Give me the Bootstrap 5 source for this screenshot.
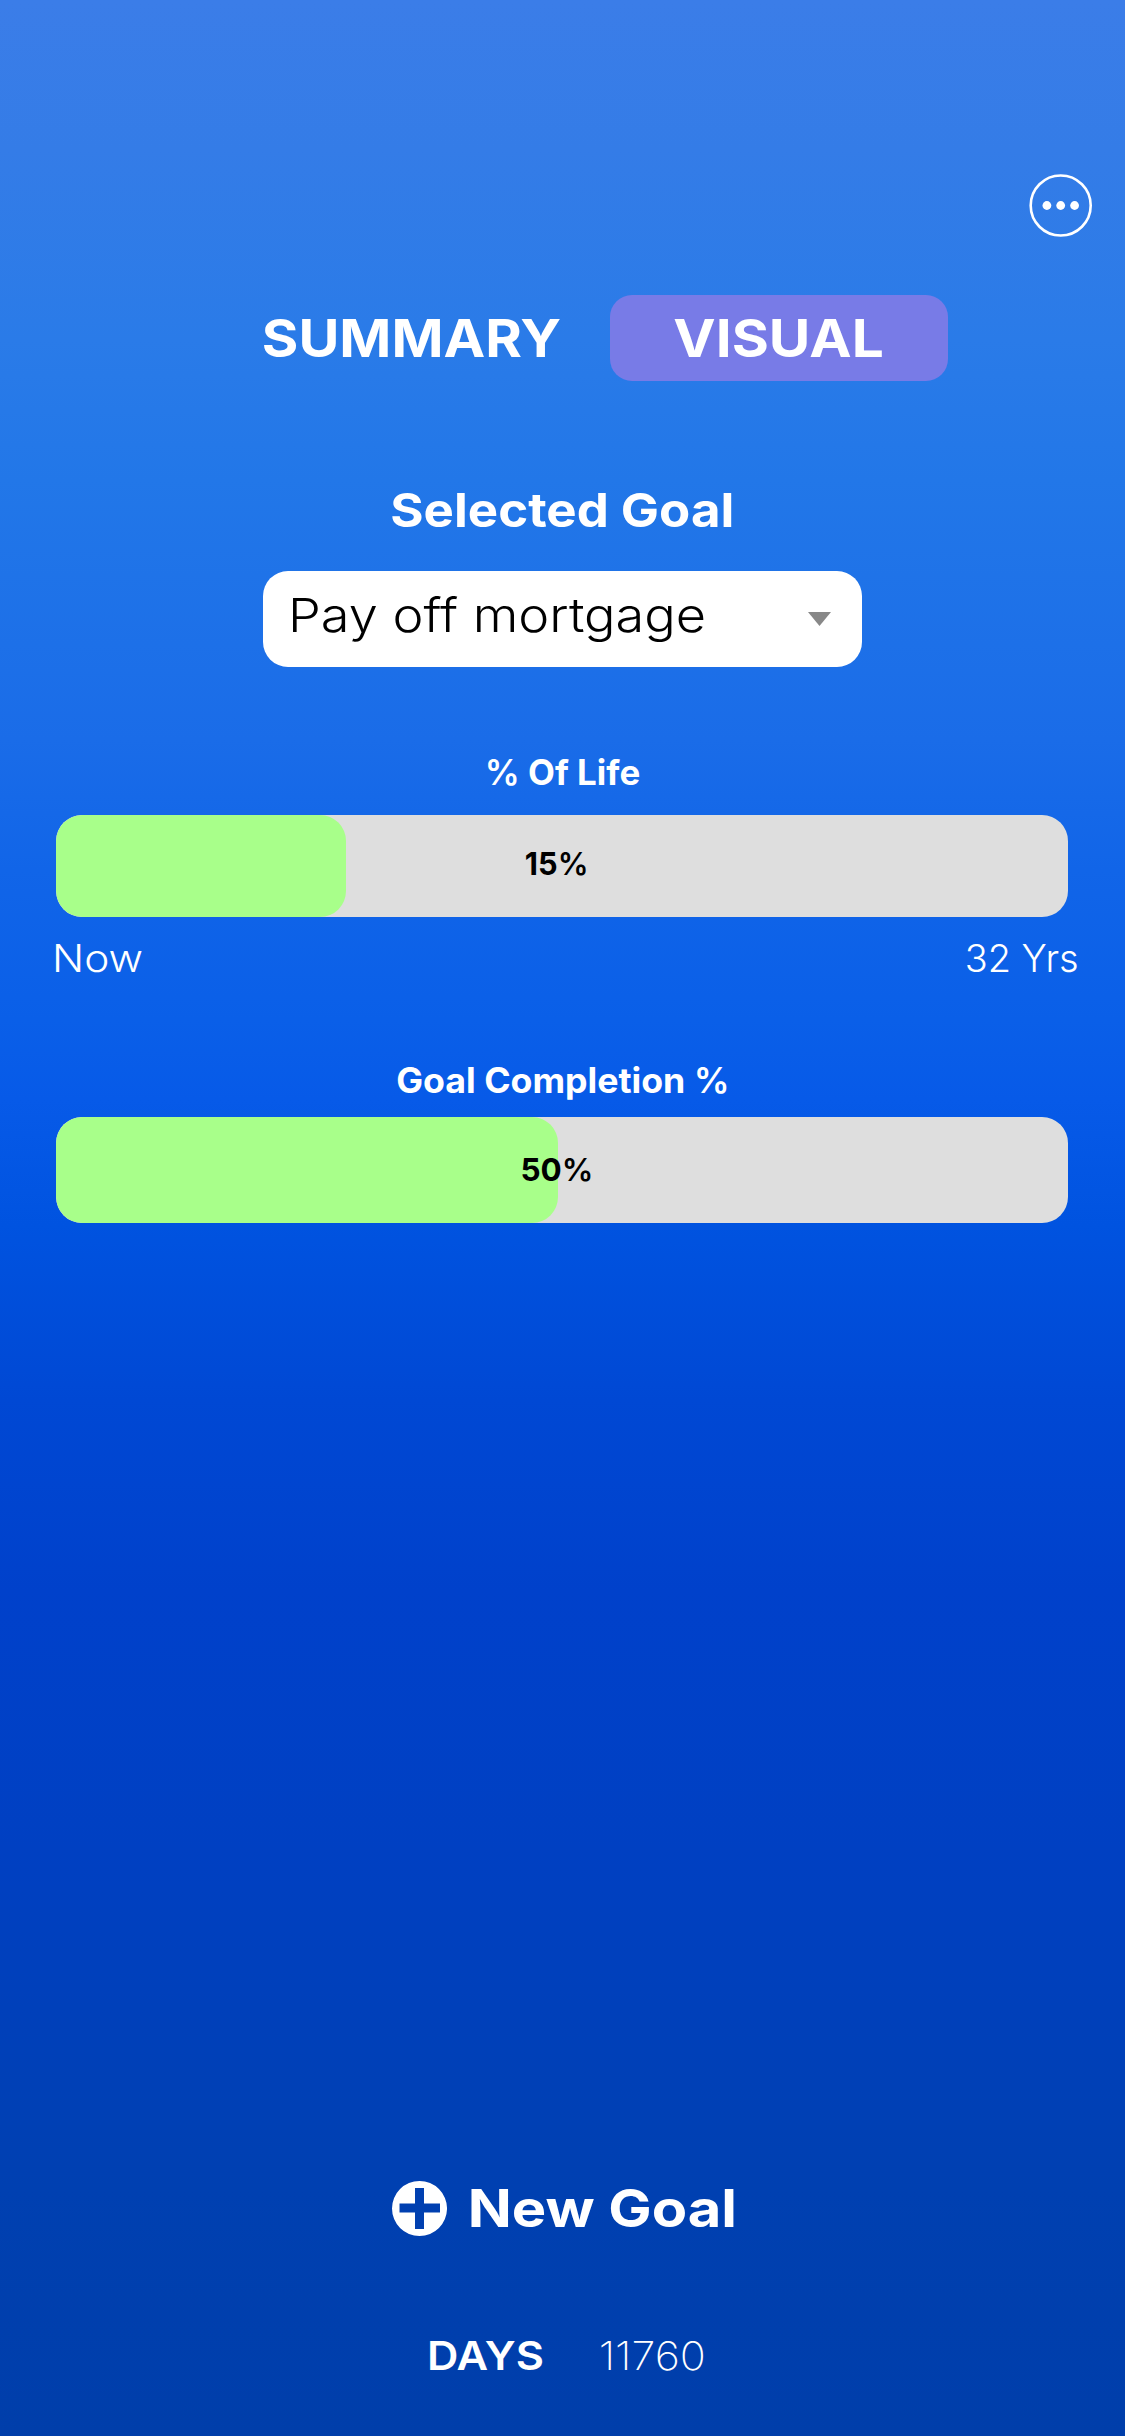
<!DOCTYPE html>
<html lang="en">
<head>
<meta charset="utf-8">
<meta name="viewport" content="width=device-width, initial-scale=1">
<title>Goals</title>
<link href="https://cdn.jsdelivr.net/npm/bootstrap@5.3.0/dist/css/bootstrap.min.css" rel="stylesheet">
<style>
body{font-family:Inter,"Open Sans",sans-serif;min-height:2436px;color:#fff;
background:linear-gradient(180deg,#3b7de8 0,#347ce7 150px,#2a7be8 340px,#2277e8 480px,#1a6ce8 740px,#1165e8 870px,#0a5fe8 1020px,#075ae8 1100px,#0053e0 1225px,#0048d4 1400px,#0041cb 1590px,#0040c2 1850px,#0040b1 2190px,#003eaa 2436px)}
.screen{min-height:2436px;padding-bottom:60px}
.wide{display:inline-block;transform:scaleX(var(--sx,1));white-space:nowrap}
.wide-start{transform-origin:left}
.wide-end{transform-origin:right}
.pct{font-weight:600}
.topbar{padding:174px 33px 0 0}
.topbar svg,.add-goal svg{display:block}
.tabs{margin-top:58px;padding-left:214px}
.tabs .nav-link{height:86px;padding:0;font-size:52.1px;font-weight:700;color:#fff;line-height:87px;text-align:center}
.tab-summary{width:395.5px}
.nav-pills.tabs .nav-link.active{width:338px;padding-left:1px;border-radius:22px;background:#787be7;color:#fff}
.goal-title{margin:99px 0 0;font-size:46.6px;font-weight:700;line-height:61px}
.goal-select{width:599px;height:96px;margin-top:30px;padding:0 31px 8px 25px;border-radius:25px;background:#fff;color:#000;font-size:46.6px;font-weight:350;line-height:88px}
.goal-select svg{margin-top:8px}
.bar-title{font-size:34.9px;font-weight:700;line-height:40px}
.life{margin-top:85px}
.completion{margin-top:82px}
.meter{margin:0 57px 0 56px;border-radius:26px;background:#dedede;height:102px}
.life .meter{margin-top:23px}
.completion .meter{margin-top:17px;height:106px}
.meter .progress-bar{border-radius:26px;background:#a8ff8a}
.meter-label{inset:0 10px 0 0;color:#000;font-size:31.5px;font-weight:700}
.life .meter-label{bottom:4px}
.range{margin-top:21px;padding:0 46.5px 0 52px;font-size:37.5px;font-weight:300;line-height:41px;height:40px}
.add-goal{gap:34px;padding-right:9px;font-size:52.1px;font-weight:700;line-height:55px;height:55px}
.days{margin-top:100px;padding-left:8px;line-height:40px;font-size:39.7px}
.days-name{font-weight:600;width:113px}
.days-count{font-weight:200;width:103px;margin-left:58px}
</style>
</head>
<body>
<main class="screen d-flex flex-column">
  <header class="topbar d-flex justify-content-end">
    <svg width="63" height="63" viewBox="0 0 63 63" role="img" aria-label="Menu">
      <circle cx="31.7" cy="31.5" r="30" fill="none" stroke="#fff" stroke-width="2.6"/>
      <g fill="#fff"><circle cx="17.9" cy="31.5" r="4.4"/><circle cx="31.7" cy="31.5" r="4.4"/><circle cx="45.6" cy="31.5" r="4.4"/></g>
    </svg>
  </header>
  <nav class="nav nav-pills tabs flex-nowrap">
    <a class="nav-link tab-summary"><span class="wide" style="--sx:1.073">SUMMARY</span></a>
    <a class="nav-link active"><span class="wide" style="--sx:1.09">VISUAL</span></a>
  </nav>
  <h1 class="goal-title text-center"><span class="wide" style="--sx:1.094">Selected Goal</span></h1>
  <div class="goal-select mx-auto d-flex align-items-center justify-content-between">
    <span class="wide wide-start" style="--sx:1.122">Pay off mortgage</span>
    <svg width="23" height="14" viewBox="0 0 23 14"><path d="M0 0H23L11.5 14Z" fill="#888"/></svg>
  </div>
  <section class="life">
    <div class="bar-title text-center"><span class="pct">%</span> Of Life</div>
    <div class="progress meter position-relative">
      <div class="progress-bar" style="width:28.7%"></div>
      <div class="meter-label position-absolute d-flex align-items-center justify-content-center"><span class="wide" style="--sx:.975">15<span class="pct">%</span></span></div>
    </div>
    <div class="range d-flex justify-content-between">
      <span class="wide wide-start" style="--sx:1.13">Now</span>
      <span class="wide wide-end" style="--sx:1.012">32 Yrs</span>
    </div>
  </section>
  <section class="completion">
    <div class="bar-title text-center"><span class="wide" style="--sx:1.023">Goal Completion <span class="pct">%</span></span></div>
    <div class="progress meter position-relative">
      <div class="progress-bar" style="width:49.6%"></div>
      <div class="meter-label position-absolute d-flex align-items-center justify-content-center"><span>50<span class="pct">%</span></span></div>
    </div>
  </section>
  <div class="add-goal mt-auto d-flex align-items-center justify-content-center">
    <svg width="55" height="55" viewBox="0 0 55 55"><path fill="#fff" fill-rule="evenodd" d="M27.5 0a27.5 27.5 0 1 1 0 55a27.5 27.5 0 0 1 0-55ZM23 7V22.500H7.500V31.500H23V48H32V31.500H48V22.500H32V7Z"/></svg>
    <span class="wide" style="--sx:1.11">New Goal</span>
  </div>
  <div class="days d-flex justify-content-center">
    <span class="days-name text-center"><span class="wide" style="--sx:1.094">DAYS</span></span>
    <span class="days-count text-center"><span class="wide" style="--sx:1.087">11760</span></span>
  </div>
</main>
<script src="https://cdn.jsdelivr.net/npm/bootstrap@5.3.0/dist/js/bootstrap.bundle.min.js"></script>
</body>
</html>
